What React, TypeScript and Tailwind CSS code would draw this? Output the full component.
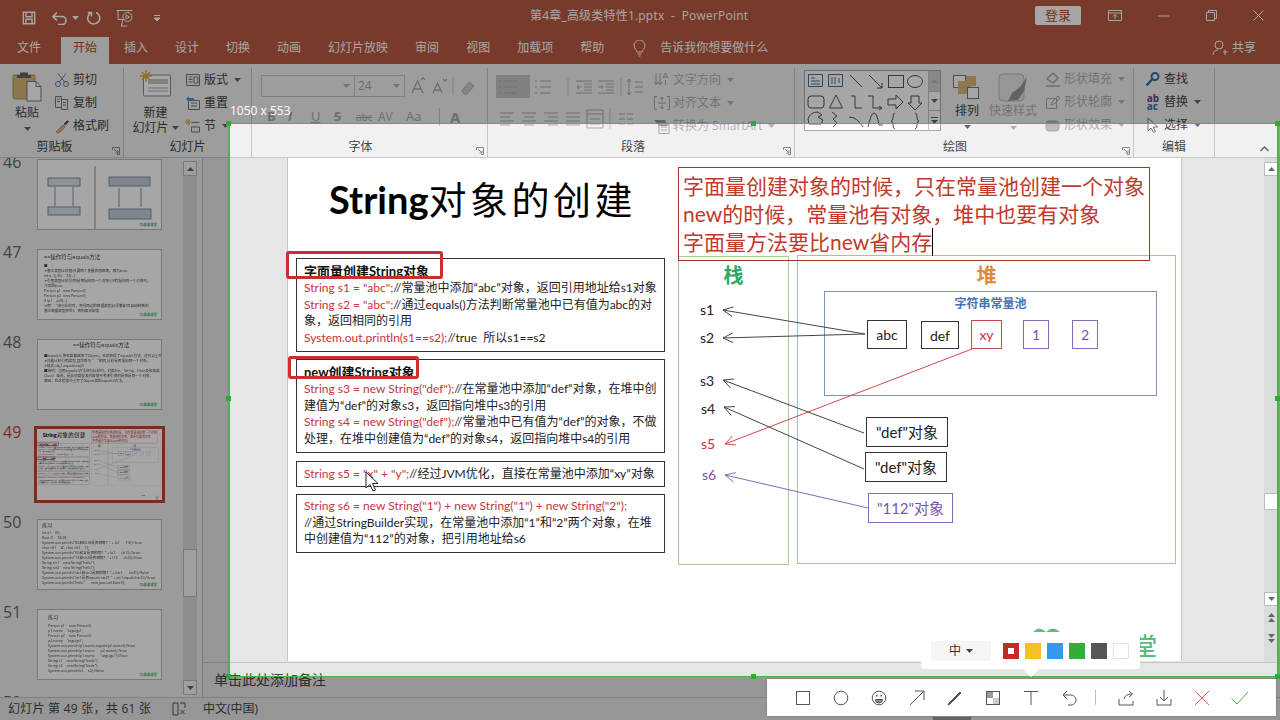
import React from "react";

const Caret = ({ color = "#666", className = "" }: { color?: string; className?: string }) => (
  <svg width="7" height="4" viewBox="0 0 7 4" className={className}>
    <path d="M0 0h7L3.5 4z" fill={color} />
  </svg>
);

const Launcher = () => (
  <svg width="8" height="8" viewBox="0 0 8 8" className="absolute right-[3px] bottom-[2px]">
    <path d="M.5 3V.5H7.5V7.5H5M2 2l4 4M6 3.5V6H3.5" fill="none" stroke="#888" strokeWidth="1" />
  </svg>
);

const Group = ({ width, label, labelClass = "", launcher, children }: { width: string; label: string; labelClass?: string; launcher?: boolean; children?: React.ReactNode }) => (
  <div className={`${width} h-full flex flex-col border-r border-[#c6c6c6] shrink-0`}>
    <div className="flex-1 min-h-0 flex">{children}</div>
    <div className={`relative h-[18px] text-center text-[12px] leading-[16px] text-[#444] ${labelClass}`}>
      {label}
      {launcher && <Launcher />}
    </div>
  </div>
);

const SmallButton = ({ icon, label, caret, disabled }: { icon: React.ReactNode; label: string; caret?: boolean; disabled?: boolean }) => (
  <div className={`h-[23px] flex items-center gap-[3px] text-[12px] whitespace-nowrap ${disabled ? "text-[#b1b1b1]" : "text-[#444]"}`}>
    <span className="w-[16px] h-[16px] flex items-center justify-center shrink-0">{icon}</span>
    <span>{label}</span>
    {caret && <Caret className="ml-[3px]" color={disabled ? "#b1b1b1" : "#666"} />}
  </div>
);

const Ico = ({ children, size = 16, vb = 16 }: { children: React.ReactNode; size?: number; vb?: number }) => (
  <svg width={size} height={size} viewBox={`0 0 ${vb} ${vb}`} fill="none" stroke="#666" strokeWidth="1">
    {children}
  </svg>
);

const DiagramArrow = ({ x1, y1, x2, y2, color }: { x1: number; y1: number; x2: number; y2: number; color: string }) => {
  const a = Math.atan2(y1 - y2, x1 - x2);
  const h = 11;
  const p = (d: number) => `${x2 + h * Math.cos(a + d)},${y2 + h * Math.sin(a + d)}`;
  return (
    <g stroke={color} strokeWidth="1" fill="none">
      <line x1={x1} y1={y1} x2={x2} y2={y2} />
      <polyline points={`${p(0.45)} ${x2},${y2} ${p(-0.45)}`} />
    </g>
  );
};

const R = ({ children }: { children: React.ReactNode }) => <span className="text-[#c7323c]">{children}</span>;

const Slide = () => (
  <div className="relative w-[893px] h-[503px] bg-white font-['Lato','Noto_Sans_CJK_SC',sans-serif] text-[#222]">
    <div className="absolute left-[41px] top-[13px] text-[38px] leading-[56px] tracking-[3.5px] whitespace-nowrap text-black">
      <b className="tracking-normal">String</b>对象的创建
    </div>

    <div className="absolute left-[8px] top-[100px] w-[369px] h-[94px] border border-[#333] pl-[7px] pt-[3px] text-[12px] leading-[16.5px] whitespace-nowrap">
      <div className="font-bold text-[13px] leading-[18px] text-[#111]">字面量创建String对象</div>
      <div><R>String s1 = "abc";</R>//常量池中添加“abc”对象，返回引用地址给s1对象</div>
      <div><R>String s2 = "abc";</R>//通过equals()方法判断常量池中已有值为abc的对</div>
      <div>象，返回相同的引用</div>
      <div><R>System.out.println(s1==s2);</R>//true&nbsp; 所以s1==s2</div>
    </div>
    <div className="absolute left-[8px] top-[201px] w-[369px] h-[94px] border border-[#333] pl-[7px] pt-[3px] text-[12px] leading-[16.5px] whitespace-nowrap">
      <div className="font-bold text-[13px] leading-[18px] text-[#111]">new创建String对象</div>
      <div><R>String s3 = new String("def");</R>//在常量池中添加“def”对象，在堆中创</div>
      <div>建值为“def”的对象s3，返回指向堆中s3的引用</div>
      <div><R>String s4 = new String("def");</R>//常量池中已有值为“def”的对象，不做</div>
      <div>处理，在堆中创建值为“def”的对象s4，返回指向堆中s4的引用</div>
    </div>
    <div className="absolute left-[8px] top-[303px] w-[369px] h-[26px] border border-[#333] pl-[7px] flex items-center text-[12px] whitespace-nowrap">
      <div><R>String s5 = "x" + "y";</R>//经过JVM优化，直接在常量池中添加“xy”对象</div>
    </div>
    <div className="absolute left-[8px] top-[336px] w-[369px] h-[59px] border border-[#333] pl-[7px] pt-[3px] text-[12px] leading-[16.5px] whitespace-nowrap">
      <div><R>String s6 = new String("1") + new String("1") + new String("2");</R></div>
      <div>//通过StringBuilder实现，在常量池中添加“1”和“2”两个对象，在堆</div>
      <div>中创建值为“112”的对象，把引用地址给s6</div>
    </div>
    <div className="absolute -left-[2px] top-[93px] w-[157px] h-[28px] border-[3px] border-[#c8302c] rounded-[3px]" />
    <div className="absolute left-[0px] top-[198px] w-[131px] h-[23px] border-[3px] border-[#c8302c] rounded-[3px]" />

    <div className="absolute left-[390px] top-[98px] w-[111px] h-[309px] border border-[#a9cb9b] text-center text-[20px] leading-[36px] font-bold text-[#2fa862]">栈</div>
    <div className="absolute left-[509px] top-[97px] w-[379px] h-[309px] border border-[#e2ab78] text-center text-[20px] leading-[38px] font-bold text-[#dd8a3c]">堆</div>
    <div className="absolute left-[536px] top-[133px] w-[333px] h-[105px] border border-[#7a94b8] text-center text-[12px] leading-[23px] font-bold text-[#4a72b0]">字符串常量池</div>

    <div className="absolute left-[390px] top-[9px] w-[472px] h-[94px] border border-[#a8322c] pl-[4px] pt-[4px] text-[21px] leading-[28px] text-[#c0392b] whitespace-nowrap">
      <div>字面量创建对象的时候，只在常量池创建一个对象</div>
      <div>new的时候，常量池有对象，堆中也要有对象</div>
      <div className="flex">字面量方法要比new省内存<span className="w-px h-[28px] bg-black" /></div>
    </div>

    <svg className="absolute left-0 top-0" width="893" height="503">
      <DiagramArrow x1={577} y1={176} x2={435} y2={152} color="#444" />
      <DiagramArrow x1={577} y1={176} x2={435} y2={180} color="#444" />
      <DiagramArrow x1={576} y1={275} x2={435} y2={222} color="#444" />
      <DiagramArrow x1={576} y1={311} x2={436} y2={249} color="#444" />
      <DiagramArrow x1={684} y1={191} x2={437} y2={286} color="#cf4a50" />
      <DiagramArrow x1={580} y1={350} x2={437} y2={317} color="#8a68b4" />
    </svg>

    <div className="absolute left-[412px] top-[142px] text-[14px] leading-[20px]">s1</div>
    <div className="absolute left-[412px] top-[170px] text-[14px] leading-[20px]">s2</div>
    <div className="absolute left-[412px] top-[213px] text-[14px] leading-[20px]">s3</div>
    <div className="absolute left-[413px] top-[241px] text-[14px] leading-[20px]">s4</div>
    <div className="absolute left-[413px] top-[276px] text-[14px] leading-[20px] text-[#c7323c]">s5</div>
    <div className="absolute left-[414px] top-[307px] text-[14px] leading-[20px] text-[#7a55a8]">s6</div>

    <div className="absolute left-[579px] top-[162px] w-[40px] h-[29px] bg-white border border-[#333] flex items-center justify-center text-[14px]">abc</div>
    <div className="absolute left-[633px] top-[163px] w-[38px] h-[28px] bg-white border border-[#333] flex items-center justify-center text-[14px]">def</div>
    <div className="absolute left-[683px] top-[162px] w-[31px] h-[29px] bg-white border border-[#c8484c] flex items-center justify-center text-[14px] text-[#c7323c]">xy</div>
    <div className="absolute left-[735px] top-[162px] w-[26px] h-[29px] bg-white border border-[#8a68b4] flex items-center justify-center text-[14px] text-[#7a55a8]">1</div>
    <div className="absolute left-[784px] top-[162px] w-[26px] h-[29px] bg-white border border-[#8a68b4] flex items-center justify-center text-[14px] text-[#7a55a8]">2</div>

    <div className="absolute left-[578px] top-[259px] w-[82px] h-[30px] bg-white border border-[#333] flex items-center justify-center text-[15px]">"def"对象</div>
    <div className="absolute left-[577px] top-[294px] w-[82px] h-[30px] bg-white border border-[#333] flex items-center justify-center text-[15px]">"def"对象</div>
    <div className="absolute left-[580px] top-[335px] w-[85px] h-[30px] bg-white border border-[#8a68b4] flex items-center justify-center text-[15px] text-[#7a55a8]">"112"对象</div>

    <svg className="absolute left-[744px] top-[466px]" width="30" height="12" viewBox="0 0 30 12">
      <path d="M1 8q6-7 13 0 7-7 14 0l0 3H1z" fill="#63bd79" />
    </svg>
    <div className="absolute left-[845px] top-[472px] text-[24px] leading-[32px] font-medium text-[#5dbb75]">堂</div>
  </div>
);

const ThumbLogo = () => (
  <div className="absolute right-[4px] bottom-[2px] text-[3.5px] leading-[5px] text-[#4fb96b] font-bold">口课课课堂</div>
);

const Thumb = ({ num, active, children }: { num: number; active?: boolean; children: React.ReactNode }) => (
  <div className="flex h-[71px] shrink-0">
    <div className={`w-[37px] pl-[3px] text-[16px] leading-[14px] -mt-[4px] ${active ? "text-[#b7472a]" : "text-[#666]"}`}>{num}</div>
    <div className={`relative w-[125px] h-[71px] bg-white overflow-hidden ${active ? "outline-[3px] outline-[#b7472a]" : "border border-[#b8b8b8]"}`}>
      <div className="blur-[0.3px]">{children}</div>
      {!active && <ThumbLogo />}
    </div>
  </div>
);

const TinyLines = ({ lines, className }: { lines: string[]; className: string }) => (
  <div className={`text-[3.6px] leading-[5px] text-[#444] whitespace-nowrap ${className}`}>
    {lines.map((l, i) => (
      <div key={i}>{l}</div>
    ))}
  </div>
);

const SlidePanel = () => (
  <div className="w-[203px] shrink-0 flex border-r border-[#bdbdbd] bg-[#efefef] font-['Open_Sans','Noto_Sans_CJK_SC',sans-serif]">
    <div className="w-[183px] flex flex-col gap-[19px] pt-px overflow-hidden">
      <Thumb num={46}>
        <svg width="125" height="71" viewBox="0 0 125 71" fill="none" stroke="#7f93a8">
          <rect x="10" y="18" width="32" height="8" fill="#d9e0e8" />
          <rect x="10" y="47" width="32" height="8" fill="#d9e0e8" />
          <path d="M17 27v19M35 27v19" />
          <path d="M57 6v66" />
          <rect x="71" y="17" width="41" height="9" fill="#c4ccd7" />
          <rect x="71" y="49" width="42" height="10" fill="#c4ccd7" />
          <path d="M81 28v19M103 28v19" />
        </svg>
      </Thumb>
      <Thumb num={47}>
        <div className="absolute left-[6px] top-[3px] text-[5.5px] leading-[8px] text-[#444]">==操作符与equals方法</div>
        <TinyLines className="absolute left-[6px] top-[13px]" lines={["■==:", "➢基本类型比较值:只要两个变量的值相等，即为true.", "     int a=5; if(a==6){…}", "➢引用类型比较引用(是否指向同一个对象):只有指向同一个对象时，==", "  才返回true.", "     Person p1=new Person();", "     Person p2=new Person();", "     if (p1==p2){…}", "  ➢用\"==\"进行比较时，符号两边的数据类型必须兼容(可自动转换的", "    基本数据类型除外)，否则编译出错"]} />
      </Thumb>
      <Thumb num={48}>
        <div className="absolute left-[35px] top-[1px] text-[5.5px] leading-[8px] text-[#444]">==操作符与equals方法</div>
        <TinyLines className="absolute left-[6px] top-[13px]" lines={["■equals(): 所有类都继承了Object，也就获得了equals()方法。还可以重写。", "", "➢只能比较引用类型,其作用与 \"==\"相同,比较是否指向同一个对象。", "➢格式:obj1.equals(obj2)", "■特例：当用equals()方法进行比较时，对类File、String、Date及包装类（Wrapper", "  Class）来说，是比较类型及内容而不考虑引用的是否是同一个对象；", "  原因：在这些类中重写了Object类的equals()方法。"]} />
      </Thumb>
      <Thumb num={49} active>
        <div className="origin-top-left scale-[0.14]">
          <Slide />
        </div>
      </Thumb>
      <Thumb num={50}>
        <div className="absolute left-[4px] top-[1px] text-[5px] leading-[8px] text-[#444]">练习</div>
        <TinyLines className="absolute left-[4px] top-[10px]" lines={["int a1 = 65;", "float f1 = 65.0f;", "System.out.println(\"65和65.0f是否相等？\" + (a1 == f1));//true", "", "char ch1 = 'A'; char ch2 = 12;", "System.out.println(\"65和'A'是否相等？\" + (a1 == ch1));//true", "System.out.println(\"12和ch2是否相等？\" + (12 == ch2));//true", "", "String str1 = new String(\"hello\");", "String str2 = new String(\"hello\");", "System.out.println(\"str1和str2是否相等？\" + (str1 == str2));//false", "", "System.out.println(\"str1是否equals str2？\" + str1.equals(str2));//true", "", "System.out.println(\"hello\" == new java.util.Date());"]} />
      </Thumb>
      <Thumb num={51}>
        <div className="absolute left-[10px] top-[3px] text-[5px] leading-[8px] text-[#444]">练习</div>
        <TinyLines className="absolute left-[10px] top-[13px]" lines={["Person p1 = new Person();", "p1.name = \"atguigu\";", "", "Person p2 = new Person();", "p2.name = \"atguigu\";", "", "System.out.println(p1.name.equals(p2.name));//true", "System.out.println(p1.name == p2.name);//true", "System.out.println(p1.name == \"atguigu\");//true", "", "String s1 = new String(\"bcde\");", "", "String s2 = new String(\"bcde\");", "System.out.println(s1==s2);//false"]} />
      </Thumb>
      <div className="pl-[3px] text-[16px] leading-[14px] text-[#666] -mt-[4px]">52</div>
    </div>
    <div className="w-[15px] flex flex-col bg-[#d9d9d9] border-r border-[#efefef] h-[534px] mt-[3px]">
      <div className="h-[15px] border border-[#bbb] bg-[#f5f5f5] flex items-center justify-center"><Caret className="rotate-180" /></div>
      <div className="mt-[373px] h-[48px] bg-[#f5f5f5] border border-[#bbb]" />
      <div className="mt-auto h-[15px] border border-[#bbb] bg-[#f5f5f5] flex items-center justify-center"><Caret /></div>
    </div>
  </div>
);

const TitleBar = () => (
  <div className="h-[37px] flex items-center bg-[#b95941] text-white relative">
    <div className="w-[530px] flex items-center pl-[22px] shrink-0 pb-[1px]">
      <svg width="14" height="14" viewBox="0 0 16 16" fill="none" stroke="#fff" strokeWidth="1.6" className="mr-[16px]">
        <path d="M1.500 1.500h13v13h-13zM4.500 1.500v5h7v-5M4.500 14.500v-5h7v5" />
      </svg>
      <svg width="16" height="14" viewBox="0 0 16 14" fill="none" stroke="#fff" strokeWidth="1.6">
        <path d="M1.500 5.500H10a4 4 0 0 1 0 8H6M5 1.500l-4 4 4 4" />
      </svg>
      <Caret color="#fff" className="ml-[4px] mr-[8px]" />
      <svg width="14" height="14" viewBox="0 0 14 14" fill="none" stroke="#fff" strokeWidth="1.6" className="mr-[15px]">
        <path d="M9 1.500a6 6 0 1 1-4.500 0M4.500 5.500v-4H.8" />
      </svg>
      <svg width="18" height="18" viewBox="0 0 18 18" fill="none" stroke="#fff" strokeWidth="1" className="mr-[19px]">
        <path d="M.5 1.500h16M2 1.500v9h7M5 17h6" />
        <circle cx="11.500" cy="8" r="4.500" />
        <path d="M10 6l3.500 2-3.500 2zM6.500 11l-1 6" />
      </svg>
      <svg width="8" height="8" viewBox="0 0 8 8" fill="#fff" stroke="#fff" strokeWidth="1">
        <path d="M1 1.500h6M1 4h6l-3 3z" />
      </svg>
    </div>
    <div className="text-[12px] tracking-[0.2px] whitespace-pre flex-1 pr-[3px] pb-[6px]">第4章_高级类特性1.pptx  -  PowerPoint</div>
    <div className="w-[46px] h-[19px] bg-white rounded-[2px] text-[#b7472a] text-[13px] leading-[19px] text-center mr-[24px] shrink-0 mb-[6px]">登录</div>
    <div className="w-[175px] flex items-center justify-between pl-[3px] pr-[16px] shrink-0 pb-[6px]">
      <svg width="14" height="11" viewBox="0 0 14 11" fill="none" stroke="#fff"><path d="M.5.500h13v10H.5zM.5 3h13M7 9V4.500M5 6.500l2-2 2 2" /></svg>
      <svg width="11" height="2" viewBox="0 0 11 2"><path d="M0 1h11" stroke="#fff" /></svg>
      <svg width="11" height="11" viewBox="0 0 11 11" fill="none" stroke="#fff"><path d="M.5 2.500h8v8h-8zM2.500 2.500v-2h8v8h-2" /></svg>
      <svg width="11" height="11" viewBox="0 0 11 11" fill="none" stroke="#fff"><path d="M.5.500l10 10M10.500.500l-10 10" /></svg>
    </div>
  </div>
);

const tabs = ["插入", "设计", "切换", "动画", "幻灯片放映", "审阅", "视图", "加载项", "帮助"];

const TabBar = () => (
  <div className="h-[27px] flex bg-[#b95941] text-white text-[12px] leading-[22px] whitespace-nowrap">
    <div className="ml-[5px] px-[12px]">文件</div>
    <div className="ml-[8px] -mt-[3px] h-[30px] px-[12px] bg-[#f1f1f1] text-[#b7472a] leading-[28px]">开始</div>
    <div className="ml-[3px] flex gap-[3px]">
      {tabs.map((t) => (
        <div key={t} className="px-[12px]">{t}</div>
      ))}
    </div>
    <svg width="13" height="17" viewBox="0 0 13 17" fill="none" stroke="#fff" className="ml-[17px] mt-[3px]">
      <path d="M4 12c0-2-3-3-3-6.500a5.500 5.500 0 0 1 11 0C12 9 9 10 9 12zM4.500 14h4M5.500 16h2" />
    </svg>
    <div className="ml-[14px] flex-1">告诉我你想要做什么</div>
    <svg width="16" height="16" viewBox="0 0 16 16" fill="none" stroke="#fff" className="mt-[3px]">
      <circle cx="7" cy="5" r="4" />
      <path d="M1 15c0-3 2-5 5-5M11 12h4.500M13 9.500V15" />
    </svg>
    <div className="ml-[4px] mr-[24px]">共享</div>
  </div>
);

const Ribbon = () => (
  <div className="h-[94px] flex bg-[#f1f1f1] border-b border-[#c8c8c8] text-[#444] pt-[4px] relative">
    <Group width="w-[124px]" label="剪贴板" labelClass="pr-[14px]" launcher>
      <div className="w-[54px] flex flex-col items-center text-[12px]">
        <svg width="30" height="32" viewBox="0 0 30 32" className="mt-[3px]">
          <rect x="1" y="4" width="22" height="24" rx="1" fill="#d9b779" stroke="#b5965f" />
          <path d="M8 4V1.500h8V4h3v3H5V4z" fill="#666" />
          <path d="M15 10.500h9l5 5V30H15z" fill="#fff" stroke="#777" />
          <path d="M24 10.500v5h5" fill="none" stroke="#777" />
        </svg>
        <div className="leading-[18px] mt-[1px]">粘贴</div>
        <Caret className="mt-[5px]" />
      </div>
      <div>
        <SmallButton label="剪切" icon={<Ico><path d="M12 1.500L5.500 10M4 1.500L10.500 10" stroke="#5a7ea8" /><circle cx="4" cy="12" r="2.500" stroke="#5a7ea8" /><circle cx="12" cy="12" r="2.500" stroke="#5a7ea8" /></Ico>} />
        <SmallButton label="复制" icon={<Ico><path d="M1.500 1.500h6v11h-6zM7.500 4.500h6v10h-6zM3 4h3M3 6.500h3M9 7.500h3M9 10h3" stroke="#777" /></Ico>} />
        <SmallButton label="格式刷" icon={<Ico><path d="M2 14l7-7 2 2-3 3.500L4 15z" fill="#d9b779" stroke="#b5965f" /><path d="M10 6l3.500-3.500 1 1L11 7.500" fill="#555" stroke="#555" /></Ico>} />
      </div>
    </Group>

    <Group width="w-[128px]" label="幻灯片">
      <div className="w-[59px] flex flex-col items-center text-[12px] leading-[15px] pl-[4px]">
        <svg width="32" height="28" viewBox="0 0 32 28" className="mt-[2px]">
          <rect x="3.500" y="5" width="27" height="21" rx="1" fill="#fff" stroke="#888" />
          <rect x="8" y="9" width="20" height="5" fill="#c6c6c6" />
          <path d="M8 18h20M8 21h20" stroke="#aaa" />
          <path d="M6 0v12M0 6h12M2 2l8 8M10 2l-8 8" stroke="#e2a93e" strokeWidth="1.500" />
        </svg>
        <div className="mt-[7px] whitespace-nowrap">新建</div>
        <div className="flex items-center gap-[3px] whitespace-nowrap">幻灯片<Caret /></div>
      </div>
      <div className="pl-[2px]">
        <SmallButton label="版式" caret icon={<Ico><path d="M1.500 2.500h13v11h-13zM3.500 5h4M3.500 7.500h4M3.500 10h4M9 5h4v6H9z" stroke="#777" /></Ico>} />
        <SmallButton label="重置" icon={<Ico><path d="M3.500 5.500h11v9h-11zM6 8h6M6 11h6" stroke="#777" /><path d="M1 4l3-3v2h5v3H4v1z" fill="#5b8fc7" stroke="none" /></Ico>} />
        <SmallButton label="节" caret icon={<Ico><path d="M6.500 4.500h8M6.500 9h8v5h-8z" stroke="#777" /><path d="M3 1v6M0 4h6M1 2l4 4M5 2L1 6" stroke="#e2a93e" /></Ico>} />
      </div>
    </Group>

    <Group width="w-[236px]" label="字体" labelClass="pr-[18px]" launcher>
      <div className="pl-[9px] pt-[7px] text-[#aaa]">
        <div className="flex items-center h-[22px]">
          <div className="w-[94px] h-[22px] border border-[#c6c6c6] flex items-center justify-end pr-[4px]"><Caret color="#b1b1b1" /></div>
          <div className="w-[50px] h-[22px] border border-[#c6c6c6] border-l-0 flex items-center justify-between pl-[3px] pr-[4px] text-[12px]">24<Caret color="#b1b1b1" /></div>
          <svg width="68" height="22" viewBox="0 0 68 22" fill="none" stroke="#aaa" className="ml-[6px]">
            <path d="M1 18L6.500 6 12 18M3 14h7M10 5l2-2 2 2" strokeWidth="1.300" />
            <path d="M22 18l4.500-10L31 18M23.500 15H30M32 4l2 2 2-2" strokeWidth="1.300" />
            <path d="M42 2v18" stroke="#c6c6c6" />
            <path d="M51 16l7-9 5 4-7 8h-3z" fill="#ccc" />
          </svg>
        </div>
        <div className="flex items-center h-[22px] mt-[9px] text-[13px] font-bold whitespace-nowrap">
          <span className="ml-[6px] w-[21px]">B</span>
          <span className="w-[23px] italic">I</span>
          <span className="w-[23px] underline font-normal">U</span>
          <span className="w-[22px] line-through">S</span>
          <span className="w-[22px] text-[10px] line-through font-normal">abc</span>
          <span className="w-[28px] font-normal text-[12px]">AV</span>
          <span className="w-[33px] font-normal">Aa</span>
          <span className="w-px h-[18px] bg-[#c6c6c6] mr-[10px]" />
          <span className="text-[15px]">A</span>
        </div>
      </div>
    </Group>

    <Group width="w-[307px]" label="段落" labelClass="pr-[16px]" launcher>
      <div className="flex flex-col pl-[8px] pt-[7px] w-[166px] shrink-0">
        <svg width="160" height="24" viewBox="0 0 160 24" fill="none" stroke="#aaa">
          <rect x="0" y="0" width="34" height="23" fill="#c5c5c5" stroke="none" />
          <path d="M8 6h13M8 12h13M8 18h13M3 6h2M3 12h2M3 18h2" />
          <path d="M44 6h11M44 12h11M44 18h11M39 6h2M39 12h2M39 18h2" />
          <path d="M80 6h16M88 9h8M88 12h8M88 15h8M80 18h16M85 12h-4M83 10l-2 2 2 2" />
          <path d="M102 6h16M110 9h8M110 12h8M110 15h8M102 18h16M102 12h5M105 10l2 2-2 2" />
          <path d="M72 3v18M125 3v18" stroke="#c6c6c6" />
          <path d="M133 4v16M131 7l2-3 2 3M131 17l2 3 2-3M139 7h8M139 12h8M139 17h8" />
        </svg>
        <svg width="160" height="24" viewBox="0 0 160 24" fill="none" stroke="#aaa" className="mt-[8px]">
          <path d="M4 6h14M4 10h10M4 14h14M4 18h10M26 6h14M28 10h10M26 14h14M28 18h10M48 6h14M52 10h10M48 14h14M52 18h10M70 6h14M70 10h14M70 14h14M70 18h14" />
          <path d="M91 3h16v18H91zM91 7h16M94 12h10M94 17h10" />
          <path d="M114 1v21" stroke="#c6c6c6" />
          <path d="M123 7h6M123 12h6M123 17h6M131 7h6M131 12h6M131 17h6" />
        </svg>
      </div>
      <div>
        <SmallButton disabled label="文字方向" caret icon={<Ico><path d="M2 1v11M6 1v11M0 10l2 3 2-3M4 10l2 3 2-3M9 6l2.500-5L14 6M9.500 5H14M11.500 8v5" stroke="#aaa" /></Ico>} />
        <SmallButton disabled label="对齐文本" caret icon={<Ico><path d="M3 1.500H.500v13H3M13 1.500h2.500v13H13M4 8h8M8 2v4M6.500 4L8 2l1.500 2M8 14v-4M6.500 12L8 14l1.500-2" stroke="#aaa" /></Ico>} />
        <SmallButton disabled label="转换为 SmartArt" caret icon={<Ico><path d="M0 2h11l3 6H5z" fill="#999" stroke="none" /><path d="M5 6.500h10v9H5zM7 9h6M7 12h6" stroke="#aaa" /></Ico>} />
      </div>
    </Group>

    <Group width="w-[339px]" label="绘图" labelClass="pr-[18px]" launcher>
      <div className="ml-[9px] mt-[2px] flex w-[137px] h-[61px] border border-[#aaa] bg-white shrink-0">
        <svg width="123" height="59" viewBox="0 0 123 59" fill="none" stroke="#555" className="shrink-0">
          <path d="M3.500 3.500h14v12h-14zM6 7h4M6 10h9M6 13h9" stroke="#4a6f94" />
          <path d="M23.500 3.500h14v12h-14zM27 6v7M30 6v7M34 7v5" stroke="#4a6f94" />
          <path d="M45 4l12 12M64 4l13 13M77 17v-5M77 17h-5" />
          <rect x="83.500" y="4.500" width="15" height="12" />
          <ellipse cx="110" cy="10.500" rx="7.500" ry="6" />
          <rect x="3" y="25" width="16" height="12" rx="3" />
          <path d="M31 24l6.500 13h-13z" />
          <path d="M46 25h4v12h7M63 25h5v12h9M77 37l-3-2M77 37l-3 2" />
          <path d="M83 28h8v-4l7 7-7 7v-4h-8zM106 25h8v7h3l-7 7-7-7h3z" />
          <path d="M4 53l-1-5q2-7 10-7l4 3-4 2 5 3-2 4zM27 41l5 4-4 3 4 4-4 4M44 46q8 0 14 10M63 56q3-14 6-14t5 12h4M90 42q-2 0-2 4t-2 4q2 0 2 4t2 4M110 42q2 0 2 4t2 4q-2 0-2 4t-2 4" />
        </svg>
        <div className="flex-1 flex flex-col border-l border-[#c6c6c6]">
          <div className="h-[21px] bg-[#d2d2d2] flex items-center justify-center border-b border-[#c6c6c6]"><Caret className="rotate-180" color="#bbb" /></div>
          <div className="h-[19px] flex items-center justify-center border-b border-[#c6c6c6]"><Caret /></div>
          <div className="flex-1 flex flex-col items-center justify-center gap-[2px]"><div className="w-[7px] h-px bg-[#666]" /><Caret /></div>
        </div>
      </div>
      <div className="w-[40px] ml-[6px] flex flex-col items-center shrink-0 text-[12px]">
        <svg width="28" height="28" viewBox="0 0 28 28" fill="none" className="mt-[5px]">
          <rect x="0.500" y="2.500" width="12" height="12" fill="#fff" stroke="#777" />
          <rect x="5" y="8" width="13" height="13" fill="#d9b779" />
          <rect x="13" y="3" width="10" height="10" fill="#d9b779" />
          <rect x="14.500" y="14.500" width="11" height="11" fill="#fff" stroke="#777" />
        </svg>
        <div className="leading-[18px] mt-[1px]">排列</div>
        <Caret className="mt-[5px]" />
      </div>
      <div className="w-[50px] ml-[1px] flex flex-col items-center shrink-0 text-[12px] text-[#b1b1b1]">
        <svg width="30" height="30" viewBox="0 0 30 30" fill="none" className="mt-[5px]">
          <rect x="1" y="1" width="25" height="27" rx="4" stroke="#bbb" fill="#e6e6e6" />
          <path d="M10 28l4-8 8-6 7-10-3 14-6 9z" fill="#999" />
        </svg>
        <div className="leading-[16px] whitespace-nowrap">快速样式</div>
        <Caret className="mt-[7px]" color="#b1b1b1" />
      </div>
      <div className="pl-[7px] -mt-[1px]">
        <SmallButton disabled label="形状填充" caret icon={<Ico><path d="M2 8l6-6 5 5-5 5zM1 15h14" stroke="#aaa" strokeWidth="1.500" /></Ico>} />
        <SmallButton disabled label="形状轮廓" caret icon={<Ico><path d="M1.500 4.500h10v10h-10zM6 11l1-3 6-6 2 2-6 6z" stroke="#aaa" /></Ico>} />
        <SmallButton disabled label="形状效果" caret icon={<Ico><rect x="1" y="4" width="13" height="10" rx="3" fill="#bbb" stroke="#aaa" /></Ico>} />
      </div>
    </Group>

    <Group width="w-[81px]" label="编辑">
      <div className="pl-[11px] -mt-[1px]">
        <SmallButton label="查找" icon={<Ico><circle cx="10" cy="5.500" r="3.500" stroke="#2f6ea8" strokeWidth="2" /><path d="M7 8.500L1.500 14.500" stroke="#2f6ea8" strokeWidth="2.400" /></Ico>} />
        <SmallButton label="替换" caret icon={<span className="text-[10px] leading-[8px] text-[#6a3f8f] font-bold">ab<br /><span className="text-[#2f6ea8]">ac</span></span>} />
        <SmallButton label="选择" caret icon={<Ico><path d="M3 1v13l3-3 2.500 4.500 2-1L8 10h4.500z" fill="#fff" stroke="#777" /></Ico>} />
      </div>
    </Group>

    <svg width="9" height="6" viewBox="0 0 9 6" fill="none" stroke="#666" strokeWidth="1.500" className="absolute right-[11px] bottom-[5px]">
      <path d="M.5 5l4-4 4 4" />
    </svg>
  </div>
);

const MainArea = () => (
  <div className="flex-1 flex flex-col min-w-0 bg-[#e6e6e6]">
    <div className="h-[505px] flex border-b border-[#c6c6c6]">
      <div className="flex-1 pl-[84px]">
        <div className="w-[895px] border-x border-[#c6c6c6]">
          <Slide />
        </div>
      </div>
      <div className="w-[14px] mr-[2px] bg-[#dcdcdc] flex flex-col pt-[4px]">
        <div className="h-[14px] bg-white border border-[#bbb] flex items-center justify-center"><Caret className="rotate-180" /></div>
        <div className="mt-[317px] h-[17px] bg-white border border-[#bbb]" />
        <div className="mt-[82px] h-[14px] bg-white border border-[#bbb] flex items-center justify-center"><Caret /></div>
        <div className="mt-[7px] flex flex-col items-center gap-[1px]"><Caret className="rotate-180" /><Caret className="rotate-180" /></div>
        <div className="mt-[12px] flex flex-col items-center gap-[1px]"><Caret /><Caret /></div>
      </div>
    </div>
    <div className="flex-1 pl-[11px] pt-[7px] text-[14px] leading-[20px] text-[#444]">单击此处添加备注</div>
  </div>
);

const StatusBar = () => (
  <div className="h-[23px] flex items-center bg-[#e6e6e6] border-t border-[#c6c6c6] text-[12px] text-[#444] whitespace-pre pl-[8px]">
    <span className="w-[164px] tracking-[0.25px]">幻灯片 第 49 张，共 61 张</span>
    <svg width="14" height="14" viewBox="0 0 14 14" fill="none" stroke="#555" className="mr-[17px]">
      <path d="M6 1H1v12h5M6 1v12M8 1h5v5M8.500 8l4 4M12.500 8l-4 4" />
    </svg>
    <span>中文(中国)</span>
    <div className="ml-[675px] mt-[19px] w-[38px] h-[4px] bg-[#9a9a9a]" />
  </div>
);

const Handle = ({ className }: { className: string }) => (
  <div className={`absolute w-[5px] h-[5px] bg-[#2fa83c] ${className}`} />
);

const ToolIcon = ({ children }: { children: React.ReactNode }) => (
  <div className="w-[38px] flex justify-center shrink-0">
    <svg width="20" height="20" viewBox="0 0 20 20" fill="none" stroke="#555" strokeWidth="1">
      {children}
    </svg>
  </div>
);

const swatches = ["bg-[#f7bf26]", "bg-[#3399ee]", "bg-[#34ad36]", "bg-[#555555]"];

const Toolbar = () => (
  <>
    <div className="absolute left-[921px] top-[632px] w-[219px] h-[37px] bg-white rounded-[3px] flex items-center pl-[10px] z-20">
      <div className="w-[60px] h-[20px] bg-[#f5f5f5] rounded-[2px] flex items-center justify-center gap-[5px] text-[12px] text-[#333]">
        中<Caret color="#444" />
      </div>
      <div className="ml-[12px] flex gap-[6px]">
        <div className="w-[16px] h-[16px] bg-[#c62a26] flex items-center justify-center"><div className="w-[6px] h-[6px] bg-white" /></div>
        {swatches.map((c) => (
          <div key={c} className={`w-[16px] h-[16px] ${c}`} />
        ))}
        <div className="w-[16px] h-[16px] bg-white border border-[#e2e2e2]" />
      </div>
      <div className="absolute left-[102px] -bottom-[8px] w-0 h-0 border-x-[8px] border-x-transparent border-t-[8px] border-t-white" />
    </div>
    <div className="absolute left-[767px] top-[679px] w-[509px] h-[37px] bg-white flex items-center pl-[17px] z-20 shadow-[0_0_2px_rgba(0,0,0,0.3)]">
      <ToolIcon><rect x="3.500" y="3.500" width="13" height="13" /></ToolIcon>
      <ToolIcon><circle cx="10" cy="10" r="6.800" /></ToolIcon>
      <ToolIcon><circle cx="10" cy="10" r="6.800" /><path d="M6.500 11.500a3.500 3.500 0 0 0 7 0z" fill="#888" /><path d="M7.800 7v1.500M12.200 7v1.500" strokeWidth="1.500" /></ToolIcon>
      <ToolIcon><path d="M3 17L17 3M8 3h9v9" /></ToolIcon>
      <ToolIcon><path d="M3 17l1-2L15 4l1 1L5 16z" fill="#555" /></ToolIcon>
      <ToolIcon>
        <rect x="3.500" y="3.500" width="13" height="13" />
        <rect x="4" y="4" width="6" height="6" fill="#999" stroke="none" />
        <rect x="10" y="10" width="6" height="6" fill="#ccc" stroke="none" />
      </ToolIcon>
      <ToolIcon><path d="M3 3.500h14M10 3.500V17" /></ToolIcon>
      <ToolIcon><path d="M8 3L4 7l4 4M4 7h8a5 5 0 0 1 0 10H9" /></ToolIcon>
      <div className="w-px h-[15px] bg-[#bbb] ml-[7px] mr-[11px]" />
      <ToolIcon><path d="M3 11v6h14v-4M8 11q1-5 8-5M13 3l3.500 3-3.500 3" /></ToolIcon>
      <ToolIcon><path d="M3 11v6h14v-6M10 2v11M6 9l4 4 4-4" /></ToolIcon>
      <ToolIcon><path d="M3 3l14 14M17 3L3 17" stroke="#d0625e" /></ToolIcon>
      <ToolIcon><path d="M1.500 10.500L7 16 18 4" stroke="#4cb050" /></ToolIcon>
    </div>
  </>
);

const App: React.FC = () => {
  return (
    <div className="relative w-[1280px] h-[720px] overflow-hidden flex flex-col font-['Open_Sans','Noto_Sans_CJK_SC',sans-serif]">
      <TitleBar />
      <TabBar />
      <Ribbon />
      <div className="flex-1 min-h-0 flex">
        <SlidePanel />
        <MainArea />
      </div>
      <StatusBar />

      {/* mouse pointer left in the capture */}
      <svg className="absolute left-[365px] top-[471px]" width="14" height="22" viewBox="0 0 14 22">
        <path d="M1 1v16l4-3.500 3 6.500 2.500-1-3-6.500H13z" fill="#fff" stroke="#222" />
      </svg>

      {/* dimmed part around the capture selection */}
      <div className="absolute left-0 top-0 w-[1280px] h-[123px] bg-black/35" />
      <div className="absolute left-0 top-[123px] w-[228px] h-[554px] bg-black/35" />
      <div className="absolute left-[1279px] top-[123px] w-px h-[554px] bg-black/35" />
      <div className="absolute left-0 top-[677px] w-[1280px] h-[43px] bg-black/35" />

      <div className="absolute left-[228px] top-[123px] w-[1051px] h-[554px] border border-x-2 border-[#4fae56]" />
      <Handle className="left-[226px] top-[121px]" />
      <Handle className="left-[751px] top-[121px]" />
      <Handle className="left-[1275px] top-[121px]" />
      <Handle className="left-[226px] top-[396px]" />
      <Handle className="left-[1275px] top-[396px]" />
      <Handle className="left-[226px] top-[674px]" />
      <Handle className="left-[751px] top-[674px]" />
      <Handle className="left-[1275px] top-[674px]" />
      <div className="absolute left-[230px] top-[103px] text-[12px] leading-[16px] text-white">1050 x 553</div>

      <Toolbar />
    </div>
  );
};

export default App;
